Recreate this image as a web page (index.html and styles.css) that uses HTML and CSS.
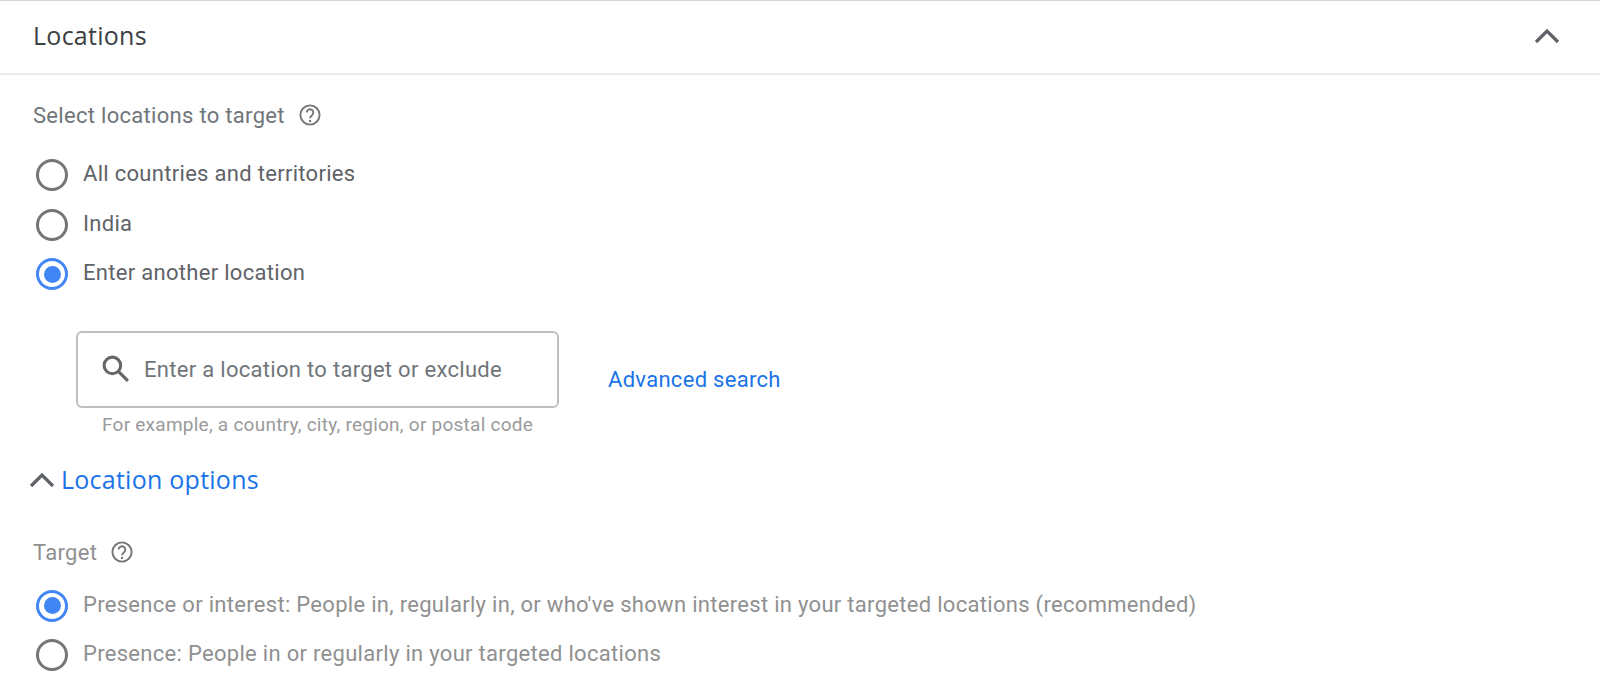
FILE: index.html
```html
<!DOCTYPE html>
<html lang="en">
<head>
<meta charset="utf-8">
<title>Locations</title>
<link rel="stylesheet" href="styles.css">
</head>
<body>
<section class="panel">
  <header class="panel-head">
    <h2 class="panel-title">Locations</h2>
    <svg class="head-chevron" viewBox="0 0 26 16"><path d="M2 14 13 3l11 11"/></svg>
  </header>
  <div class="panel-body">
    <div class="label-row">
      <span class="label">Select locations to target</span>
      <svg class="help" viewBox="0 0 24 24"><circle cx="12" cy="12" r="9.6"/><path d="M8.7 9.6a3.3 3.3 0 1 1 5.3 2.6c-1.3 1-2 1.6-2 3.1"/><circle class="dot" cx="12" cy="18" r="1.2"/></svg>
    </div>
    <div class="radios">
      <div class="radio-row"><span class="radio"></span><span class="radio-text">All countries and territories</span></div>
      <div class="radio-row"><span class="radio"></span><span class="radio-text">India</span></div>
      <div class="radio-row"><span class="radio on"></span><span class="radio-text">Enter another location</span></div>
    </div>
    <div class="search-row">
      <div class="search-col">
        <div class="search-box">
          <svg class="search-icon" viewBox="0 0 28 28"><circle cx="11" cy="11" r="8"/><path d="m17 17 9 9"/></svg>
          <span class="search-text">Enter a location to target or exclude</span>
        </div>
        <div class="hint">For example, a country, city, region, or postal code</div>
      </div>
      <a class="adv-link">Advanced search</a>
    </div>
    <div class="options-row">
      <svg class="opt-chevron" viewBox="0 0 26 16"><path d="M2 14 13 3l11 11"/></svg>
      <span class="options-link">Location options</span>
    </div>
    <div class="label-row target-row">
      <span class="label muted">Target</span>
      <svg class="help" viewBox="0 0 24 24"><circle cx="12" cy="12" r="9.6"/><path d="M8.7 9.6a3.3 3.3 0 1 1 5.3 2.6c-1.3 1-2 1.6-2 3.1"/><circle class="dot" cx="12" cy="18" r="1.2"/></svg>
    </div>
    <div class="radios target-radios">
      <div class="radio-row"><span class="radio on"></span><span class="radio-text muted">Presence or interest: People in, regularly in, or who've shown interest in your targeted locations (recommended)</span></div>
      <div class="radio-row"><span class="radio"></span><span class="radio-text muted">Presence: People in or regularly in your targeted locations</span></div>
    </div>
  </div>
</section>
</body>
</html>
```
FILE: styles.css
```css
* { box-sizing: border-box; }
html, body { margin: 0; height: 100%; background: #fff; overflow: hidden; }
body { font-family: Roboto, "Liberation Sans", sans-serif; color: #5f6368; }

.panel { border-top: 1px solid #d4d4d4; }
.panel-head {
  height: 74px;
  padding: 0 40px 5px 33px;
  display: flex;
  align-items: center;
  justify-content: space-between;
  border-bottom: 2px solid #ebebeb;
}
.panel-title { margin: 0; font-family: "Open Sans", Roboto, sans-serif; font-size: 25px; font-weight: 400; letter-spacing: .27px; color: #3c4043; }
.head-chevron { width: 26px; height: 16px; margin-top: 3px; fill: none; stroke: #5f6368; stroke-width: 3.2; }

.panel-body { padding: 0 33px; }
.label-row { display: flex; align-items: center; gap: 13px; }
.label-row:first-child { padding-top: 27px; height: 53px; }
.label { font-size: 22px; letter-spacing: .3px; color: #70757a; }
.label.muted { color: #909090; }
.help { width: 24px; height: 24px; fill: none; stroke: #757575; stroke-width: 1.9; }
.help .dot { fill: #757575; stroke: none; }

.radios { margin-top: 21px; display: flex; flex-direction: column; }
.radio-row { height: 49.5px; display: flex; align-items: center; gap: 15px; padding-left: 3px; }
.radio {
  width: 32px; height: 32px; flex: none;
  border: 3px solid #757575; border-radius: 50%;
  margin-top: 3px;
}
.radio.on { border-color: #4285f4; position: relative; }
.radio.on::after {
  content: ""; position: absolute; inset: 4.5px;
  background: #4285f4; border-radius: 50%;
}
.radio-text { font-size: 22px; color: #5f6368; letter-spacing: .3px; }
.radio-text.muted { color: #909090; }

.search-row { display: flex; margin: 33px 0 0 43px; }
.search-col { width: 483px; }
.search-box {
  height: 77px;
  border: 2px solid #bcbfc3; border-radius: 6px;
  display: flex; align-items: center; gap: 14px;
  padding-left: 23px;
}
.search-icon { width: 29px; height: 29px; flex: none; fill: none; stroke: #666; stroke-width: 3; margin-top: -2px; }
.search-text { font-size: 22px; color: #70757a; letter-spacing: .3px; white-space: nowrap; }
.hint { margin: 5px 0 0 26px; font-size: 19px; color: #9a9a9a; letter-spacing: .25px; white-space: nowrap; }
.adv-link { margin: 36px 0 0 49px; font-size: 22px; color: #1a73e8; letter-spacing: .3px; }

.options-row { display: flex; align-items: center; gap: 6px; margin-top: 26px; margin-left: -4px; }
.opt-chevron { width: 26px; height: 16px; fill: none; stroke: #5f6368; stroke-width: 3.2; margin-top: 3px; }
.options-link { font-family: "Open Sans", Roboto, sans-serif; font-size: 25px; letter-spacing: .25px; color: #1a73e8; }

.target-row { margin-top: 44px; }
.target-radios { margin-top: 15px; }
```
